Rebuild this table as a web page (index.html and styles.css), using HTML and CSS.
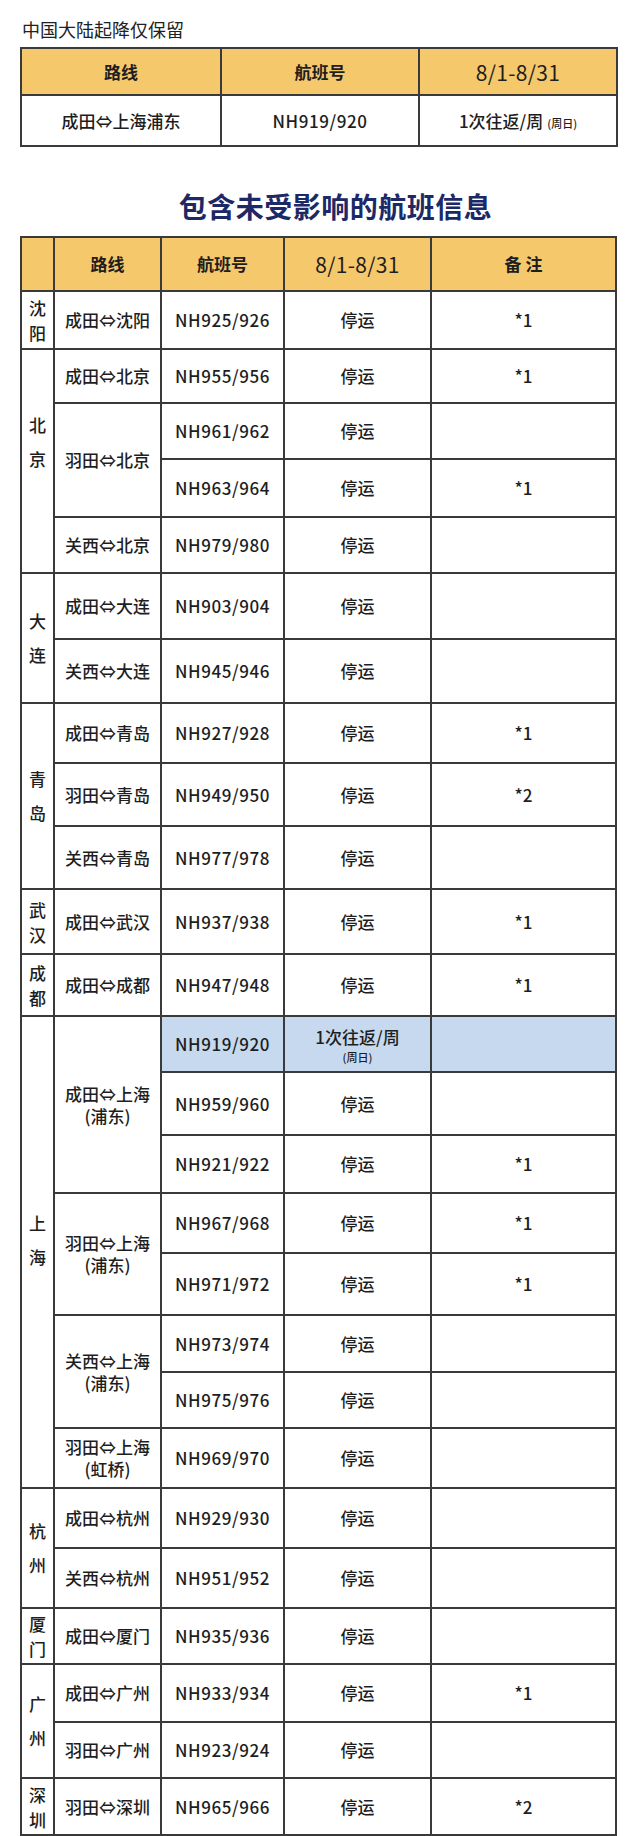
FILE: index.html
```html
<!DOCTYPE html>
<html lang="zh-CN">
<head>
<meta charset="utf-8">
<title>航班信息</title>
<link rel="stylesheet" href="styles.css">
</head>
<body>
<div class="page">
  <div class="title1">中国大陆起降仅保留</div>
  <div class="t1">
    <div class="c hd">路线</div>
    <div class="c hd">航班号</div>
    <div class="c hd date">8/1-8/31</div>
    <div class="c">成田⇔上海浦东</div>
    <div class="c num">NH919/920</div>
    <div class="c">1次往返/周<span class="small inl">(周日)</span></div>
  </div>

  <div class="title2">包含未受影响的航班信息</div>

  <div class="t2">
    <div class="c hd reg"></div>
    <div class="c hd route">路线</div>
    <div class="c hd fl">航班号</div>
    <div class="c hd st date">8/1-8/31</div>
    <div class="c hd nt">备 注</div>

    <div class="c reg r1">沈<br>阳</div>
    <div class="c route">成田⇔沈阳</div>
    <div class="c fl num">NH925/926</div>
    <div class="c st">停运</div>
    <div class="c nt">*1</div>

    <div class="c reg rm s4 bj">北<br>京</div>
    <div class="c route">成田⇔北京</div>
    <div class="c fl num">NH955/956</div>
    <div class="c st">停运</div>
    <div class="c nt">*1</div>
    <div class="c route s2">羽田⇔北京</div>
    <div class="c fl num">NH961/962</div>
    <div class="c st">停运</div>
    <div class="c nt"></div>
    <div class="c fl num">NH963/964</div>
    <div class="c st">停运</div>
    <div class="c nt">*1</div>
    <div class="c route">关西⇔北京</div>
    <div class="c fl num">NH979/980</div>
    <div class="c st">停运</div>
    <div class="c nt"></div>

    <div class="c reg rm s2">大<br>连</div>
    <div class="c route">成田⇔大连</div>
    <div class="c fl num">NH903/904</div>
    <div class="c st">停运</div>
    <div class="c nt"></div>
    <div class="c route">关西⇔大连</div>
    <div class="c fl num">NH945/946</div>
    <div class="c st">停运</div>
    <div class="c nt"></div>

    <div class="c reg rm s3">青<br>岛</div>
    <div class="c route">成田⇔青岛</div>
    <div class="c fl num">NH927/928</div>
    <div class="c st">停运</div>
    <div class="c nt">*1</div>
    <div class="c route">羽田⇔青岛</div>
    <div class="c fl num">NH949/950</div>
    <div class="c st">停运</div>
    <div class="c nt">*2</div>
    <div class="c route">关西⇔青岛</div>
    <div class="c fl num">NH977/978</div>
    <div class="c st">停运</div>
    <div class="c nt"></div>

    <div class="c reg r1">武<br>汉</div>
    <div class="c route">成田⇔武汉</div>
    <div class="c fl num">NH937/938</div>
    <div class="c st">停运</div>
    <div class="c nt">*1</div>

    <div class="c reg r1">成<br>都</div>
    <div class="c route">成田⇔成都</div>
    <div class="c fl num">NH947/948</div>
    <div class="c st">停运</div>
    <div class="c nt">*1</div>

    <div class="c reg rm s8 sh">上<br>海</div>
    <div class="c route s3 two">成田⇔上海<br>(浦东)</div>
    <div class="c fl num blue">NH919/920</div>
    <div class="c st blue stack"><span class="main">1次往返/周</span><span class="small sub">(周日)</span></div>
    <div class="c nt blue"></div>
    <div class="c fl num">NH959/960</div>
    <div class="c st">停运</div>
    <div class="c nt"></div>
    <div class="c fl num">NH921/922</div>
    <div class="c st">停运</div>
    <div class="c nt">*1</div>
    <div class="c route s2 two">羽田⇔上海<br>(浦东)</div>
    <div class="c fl num">NH967/968</div>
    <div class="c st">停运</div>
    <div class="c nt">*1</div>
    <div class="c fl num">NH971/972</div>
    <div class="c st">停运</div>
    <div class="c nt">*1</div>
    <div class="c route s2 two">关西⇔上海<br>(浦东)</div>
    <div class="c fl num">NH973/974</div>
    <div class="c st">停运</div>
    <div class="c nt"></div>
    <div class="c fl num">NH975/976</div>
    <div class="c st">停运</div>
    <div class="c nt"></div>
    <div class="c route two">羽田⇔上海<br>(虹桥)</div>
    <div class="c fl num">NH969/970</div>
    <div class="c st">停运</div>
    <div class="c nt"></div>

    <div class="c reg rm s2 hz">杭<br>州</div>
    <div class="c route">成田⇔杭州</div>
    <div class="c fl num">NH929/930</div>
    <div class="c st">停运</div>
    <div class="c nt"></div>
    <div class="c route">关西⇔杭州</div>
    <div class="c fl num">NH951/952</div>
    <div class="c st">停运</div>
    <div class="c nt"></div>

    <div class="c reg r1">厦<br>门</div>
    <div class="c route">成田⇔厦门</div>
    <div class="c fl num">NH935/936</div>
    <div class="c st">停运</div>
    <div class="c nt"></div>

    <div class="c reg rm s2">广<br>州</div>
    <div class="c route">成田⇔广州</div>
    <div class="c fl num">NH933/934</div>
    <div class="c st">停运</div>
    <div class="c nt">*1</div>
    <div class="c route">羽田⇔广州</div>
    <div class="c fl num">NH923/924</div>
    <div class="c st">停运</div>
    <div class="c nt"></div>

    <div class="c reg r1">深<br>圳</div>
    <div class="c route">羽田⇔深圳</div>
    <div class="c fl num">NH965/966</div>
    <div class="c st">停运</div>
    <div class="c nt">*2</div>
  </div>
</div>
</body>
</html>
```

FILE: styles.css
```css
* { box-sizing: border-box; }
html, body { margin: 0; padding: 0; background: #ffffff; }
body {
  font-family: "Noto Sans CJK SC", "Noto Sans", sans-serif;
  color: #1e1e1e;
  width: 640px;
  height: 1836px;
  overflow: hidden;
}
.page { padding: 0 0 0 20px; }

.title1 {
  margin-top: 17px;
  padding-left: 2px;
  font-size: 18px;
  line-height: 24px;
  color: #222;
}

.t1 {
  margin-top: 6px;
  width: 598px;
  display: grid;
  grid-template-columns: 198px 196px 196px;
  grid-template-rows: 45px 49px;
  gap: 2px;
  padding: 2px;
  background: #3a3a3a;
}

.title2 {
  margin-top: 41px;
  width: 597px;
  padding-left: 34px;
  text-align: center;
  font-size: 28px;
  line-height: 36px;
  font-weight: 700;
  color: #1d2966;
  letter-spacing: 0.5px;
}

.t2 {
  margin-top: 12px;
  width: 597px;
  display: grid;
  grid-template-columns: 31px 105px 121px 145px 183px;
  grid-template-rows: 52px 56px 52px 54px 56px 54px 64px 62px 58px 61px 61px 63px 60px 54px 61px 56px 58px 60px 55px 54px 58px 58px 58px 54px 56px 54px 55px;
  gap: 2px;
  padding: 2px;
  background: #3a3a3a;
}

.c {
  background: #ffffff;
  display: flex;
  align-items: center;
  justify-content: center;
  text-align: center;
  font-size: 17px;
  font-weight: 500;
  line-height: 22px;
  color: #1e1e1e;
}
.hd {
  background: #f6c86c;
  font-weight: 700;
  font-size: 17px;
}
.date {
  font-weight: 400;
  font-size: 21px;
  letter-spacing: 0.3px;
}
.num { letter-spacing: 0.6px; }

.reg { grid-column: 1; }
.route { grid-column: 2; }
.fl { grid-column: 3; }
.st { grid-column: 4; }
.nt { grid-column: 5; }

.s2 { grid-row: span 2; }
.s3 { grid-row: span 3; }
.s4 { grid-row: span 4; }
.s8 { grid-row: span 8; }

.r1 { line-height: 25px; }
.rm { line-height: 34px; }
.bj { padding-bottom: 38px; }
.sh { padding-bottom: 24px; }

.two { line-height: 22px; }

.blue { background: #c6d9ef; }
.stack { flex-direction: column; }
.main { display: block; line-height: 25px; }
.sub { display: block; line-height: 16px; }
.small { font-size: 11px; }
.inl { margin-left: 4px; margin-top: 4px; }
```
